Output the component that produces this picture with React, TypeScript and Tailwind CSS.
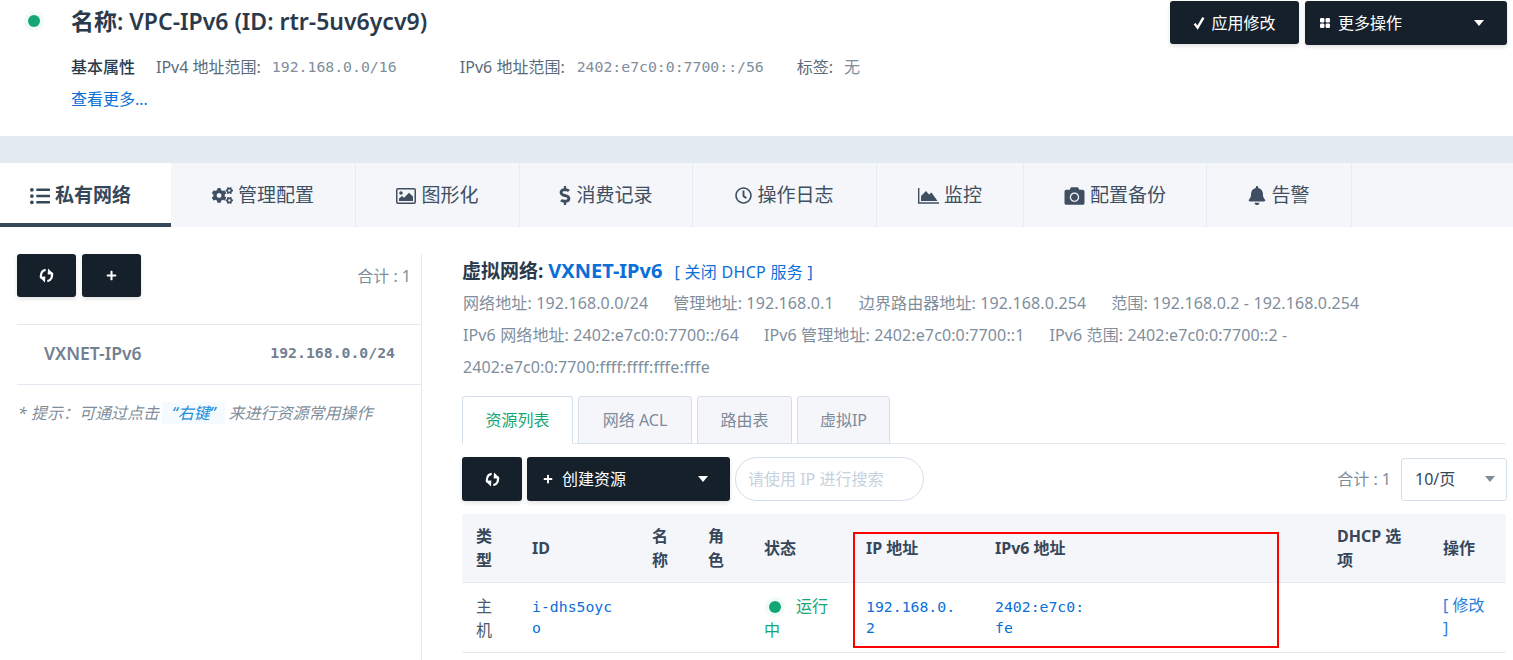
import { FaBell, FaCamera, FaCogs, FaDollarSign, FaListUl, FaPlus, FaRegClock } from 'react-icons/fa';
import type { ReactNode } from 'react';

const SANS = 'font-["Noto_Sans","Noto_Sans_CJK_SC",sans-serif]';
const MONO = 'font-["DejaVu_Sans_Mono","Noto_Sans_CJK_SC",monospace] text-[14.8px]';

const RefreshIcon = () => (
  <svg viewBox="0 0 20 20" className="h-[17px] w-[17px]" fill="none" stroke="currentColor" strokeWidth="2.6">
    <path d="M9 3.4A6.6 6.6 0 0 0 4.4 13.4" />
    <path d="M1.4 11.6 L8.6 11.2 L8.2 18.2 Z" fill="currentColor" stroke="none" />
    <path d="M11 16.6A6.6 6.6 0 0 0 15.6 6.6" />
    <path d="M18.6 8.4 L11.4 8.8 L11.8 1.8 Z" fill="currentColor" stroke="none" />
  </svg>
);

const CheckIcon = () => (
  <svg viewBox="0 0 12 14" className="h-[14px] w-[12px]" fill="none" stroke="currentColor" strokeWidth="2.4">
    <path d="M1.6 7.6 L4.6 11.6 L10.4 1.6" />
  </svg>
);

const GridIcon = () => (
  <svg viewBox="0 0 10 10" className="h-[10px] w-[10px]" fill="currentColor">
    <rect x="0" y="0" width="4.4" height="4.4" rx="1.2" />
    <rect x="5.6" y="0" width="4.4" height="4.4" rx="1.2" />
    <rect x="0" y="5.6" width="4.4" height="4.4" rx="1.2" />
    <rect x="5.6" y="5.6" width="4.4" height="4.4" rx="1.2" />
  </svg>
);

const FrameImageIcon = () => (
  <svg viewBox="0 0 20 16" className="h-[16px] w-[20px]">
    <rect x="0.75" y="0.75" width="18.5" height="14.5" rx="1.2" fill="none" stroke="currentColor" strokeWidth="1.5" />
    <circle cx="5" cy="5" r="1.8" fill="currentColor" />
    <path d="M3 13 V10.5 L6 8 L8 9.8 L13 4.8 L17 8.6 V13 Z" fill="currentColor" />
  </svg>
);

const AreaIcon = () => (
  <svg viewBox="0 0 21 16" className="h-[16px] w-[21px]">
    <path d="M0.7 0 V15 H21" fill="none" stroke="currentColor" strokeWidth="1.4" />
    <path d="M3 13 V8 L8 3 L11 6.5 L13.5 4.5 L19.5 13 Z" fill="currentColor" />
  </svg>
);

const TABS = [
  { label: '私有网络', icon: <FaListUl className="h-[20px] w-[20px]" />, width: 'w-[171px]', active: true },
  { label: '管理配置', icon: <FaCogs className="h-[21px] w-[21px]" />, width: 'w-[185px]' },
  { label: '图形化', icon: <FrameImageIcon />, width: 'w-[164px]' },
  { label: '消费记录', icon: <FaDollarSign className="h-[19px] w-[12px]" />, width: 'w-[173px]' },
  { label: '操作日志', icon: <FaRegClock className="h-[17px] w-[17px]" />, width: 'w-[184px]' },
  { label: '监控', icon: <AreaIcon />, width: 'w-[147px]' },
  { label: '配置备份', icon: <FaCamera className="h-[20px] w-[21px]" />, width: 'w-[183px]' },
  { label: '告警', icon: <FaBell className="h-[19px] w-[18px]" />, width: 'w-[145px]' },
];

const Dot = () => (
  <span className="inline-block h-[12px] w-[12px] rounded-full bg-[#15a675] shadow-[0_0_0_4px_#f0fbf7]" />
);

const DarkButton = ({ className, children }: { className: string; children: ReactNode }) => (
  <button
    type="button"
    className={`flex items-center rounded-[3px] bg-[#15202b] text-white shadow-[0_2px_4px_rgba(0,0,0,0.12)] ${className}`}
  >
    {children}
  </button>
);

const Caret = ({ className = 'border-t-white' }: { className?: string }) => (
  <span className={`h-0 w-0 border-x-[5.5px] border-t-[6px] border-x-transparent ${className}`} />
);

const SubTab = ({ label, width, active }: { label: string; width: string; active?: boolean }) => (
  <div
    className={`-mb-px flex h-[48px] items-center justify-center rounded-t-[3px] border border-[#d5dfe9] text-[16px] ${width} ${
      active ? 'border-b-white bg-white text-[#15a675]' : 'bg-[#f4f6fa] text-[#7c8a99]'
    }`}
  >
    {label}
  </div>
);

const Th = ({ children, width }: { children?: ReactNode; width: string }) => (
  <th className={`${width} pl-[14px] pr-[14px] text-left align-middle text-[16px] font-bold leading-[24px] text-[#36475a]`}>
    {children}
  </th>
);

// cells carry their own font size and line height, mono ones are smaller
const Td = ({ children, className = '' }: { children?: ReactNode; className?: string }) => (
  <td className={`break-all pl-[14px] align-middle ${className}`}>{children}</td>
);

export default function App() {
  return (
    <div className={`relative h-[660px] w-[1513px] overflow-hidden bg-white text-[#36475a] ${SANS}`}>
      <header className="flex h-[136px] items-start justify-between pr-[6px]">
        <div className="flex">
          <div className="flex w-[71px] justify-center pr-[4px] pt-[15px]">
            <Dot />
          </div>
          <div>
            <h1 className="mt-[5px] text-[23px] font-semibold leading-[32px] text-[#2a3a4c]">
              名称: VPC-IPv6 (ID: rtr-5uv6ycv9)
            </h1>
            <div className="mt-[19px] flex items-center text-[16px] leading-[22px] text-[#5b6a7a]">
              <span className="w-[85px] font-medium text-[#2a3a4c]">基本属性</span>
              <span>IPv4 地址范围:</span>
              <span className={`ml-[11px] w-[188px] text-[#808e9c] ${MONO}`}>192.168.0.0/16</span>
              <span>IPv6 地址范围:</span>
              <span className={`ml-[12px] w-[220px] text-[#808e9c] ${MONO}`}>2402:e7c0:0:7700::/56</span>
              <span>标签:</span>
              <span className="ml-[11px] text-[#808e9c]">无</span>
            </div>
            <a className="mt-[10px] block text-[16px] leading-[22px] text-[#0b6fd8]">查看更多...</a>
          </div>
        </div>
        <div className="mt-px flex gap-[6px]">
          <DarkButton className="h-[43px] w-[129px] justify-center gap-[6px] text-[16px]">
            <CheckIcon />
            应用修改
          </DarkButton>
          <DarkButton className="h-[44px] w-[202px] justify-between pl-[15px] pr-[23px] text-[16px]">
            <span className="flex items-center gap-[8px]">
              <GridIcon />
              更多操作
            </span>
            <Caret />
          </DarkButton>
        </div>
      </header>

      <div className="h-[27px] bg-[#e3eaf1]" />

      <nav className="flex h-[64px] bg-[#f4f6fa]">
        {TABS.map((tab) => (
          <div
            key={tab.label}
            className={`flex items-center justify-center gap-[5px] text-[19px] ${tab.width} ${
              tab.active
                ? 'border-b-[4px] border-[#36475a] bg-white pr-[10px] pt-[5px] font-bold'
                : 'border-r border-[#e6ebf1] pt-px text-[#3f4f61]'
            }`}
          >
            {tab.icon}
            {tab.label}
          </div>
        ))}
      </nav>

      <main className="flex">
        <aside className="ml-[17px] mt-[27px] h-[406px] w-[405px] border-r border-[#e3eaf1]">
          <div className="flex h-[71px] justify-between border-b border-[#e3eaf1] pr-[10px]">
            <div className="flex gap-[6px]">
              <DarkButton className="h-[43px] w-[59px] justify-center">
                <RefreshIcon />
              </DarkButton>
              <DarkButton className="h-[43px] w-[59px] justify-center text-[11px]">
                <FaPlus />
              </DarkButton>
            </div>
            <span className="mt-[11px] text-[16px] leading-[22px] text-[#808e9c]">合计 : 1</span>
          </div>
          <div className="flex h-[60px] items-center justify-between border-b border-[#e3eaf1] pb-[3px] pl-[27px] pr-[26px] text-[#728090]">
            <span className="text-[17.5px] font-semibold">VXNET-IPv6</span>
            <span className={`font-bold ${MONO}`}>192.168.0.0/24</span>
          </div>
          <p className="mt-[17px] pl-[1px] text-[16px] italic leading-[22px] text-[#808e9c]">
            * 提示：可通过点击
            <span className="ml-[3px] bg-[#f5fafe] px-[10px] text-[#1c8fdc]">“右键”</span>
            <span className="ml-[3px]">来进行资源常用操作</span>
          </p>
        </aside>

        <section className="ml-[40px] mt-[32px] w-[1044px]">
          <h2 className="flex items-baseline text-[19px] font-bold leading-[24px] text-[#2a3a4c]">
            虚拟网络:
            <span className="ml-[5px] text-[20px] text-[#0b6fd8]">VXNET-IPv6</span>
            <a className="ml-[12px] text-[16px] font-normal tracking-[0.3px] text-[#0b6fd8]">[ 关闭 DHCP 服务 ]</a>
          </h2>
          <div className="mt-[3px] pl-px text-[16px] leading-[32px] tracking-[0.12px] text-[#808e9c]">
            <div className="flex gap-[25px]">
              <span>网络地址: 192.168.0.0/24</span>
              <span>管理地址: 192.168.0.1</span>
              <span>边界路由器地址: 192.168.0.254</span>
              <span>范围: 192.168.0.2 - 192.168.0.254</span>
            </div>
            <div className="flex gap-[25px]">
              <span>IPv6 网络地址: 2402:e7c0:0:7700::/64</span>
              <span>IPv6 管理地址: 2402:e7c0:0:7700::1</span>
              <span>IPv6 范围: 2402:e7c0:0:7700::2 -</span>
            </div>
            <div>2402:e7c0:0:7700:ffff:ffff:fffe:fffe</div>
          </div>

          <div className="mt-[13px] flex h-[48px] gap-[5px] border-b border-[#e3eaf1]">
            <SubTab label="资源列表" width="w-[111px]" active />
            <SubTab label="网络 ACL" width="w-[114px]" />
            <SubTab label="路由表" width="w-[95px]" />
            <SubTab label="虚拟IP" width="w-[93px]" />
          </div>

          <div className="mt-[13px] flex h-[44px] items-center">
            <DarkButton className="h-[44px] w-[60px] justify-center">
              <RefreshIcon />
            </DarkButton>
            <DarkButton className="ml-[5px] h-[44px] w-[203px] justify-between pl-[16px] pr-[22px] text-[16px]">
              <span className="flex items-center gap-[9px]">
                <FaPlus className="text-[10px]" />
                创建资源
              </span>
              <Caret />
            </DarkButton>
            <div className="ml-[5px] flex h-[44px] w-[189px] items-center rounded-full border border-[#d5dfe9] pl-[12px] text-[16px] text-[#c6d2de]">
              请使用 IP 进行搜索
            </div>
            <span className="ml-auto text-[16px] text-[#808e9c]">合计 : 1</span>
            <div className="-mr-px ml-[10px] flex h-[43px] w-[106px] items-center justify-between rounded-[3px] border border-[#d5dfe9] pl-[13px] pr-[11px] text-[16px] text-[#36475a]">
              10/页
              <Caret className="border-t-[#808e9c]" />
            </div>
          </div>

          <table className="mt-[13px] w-[1044px] table-fixed border-collapse">
            <thead>
              <tr className="h-[68px] border-b border-[#e3eaf1] bg-[#f4f6fa]">
                <Th width="w-[56px]">类型</Th>
                <Th width="w-[120px]">ID</Th>
                <Th width="w-[56px]">名称</Th>
                <Th width="w-[56px]">角色</Th>
                <Th width="w-[102px]">状态</Th>
                <Th width="w-[129px]">IP 地址</Th>
                <Th width="w-[342px]">IPv6 地址</Th>
                <Th width="w-[106px]">DHCP 选项</Th>
                <Th width="w-[77px]">操作</Th>
              </tr>
            </thead>
            <tbody>
              <tr className="h-[70px] border-b border-[#e3eaf1]">
                <Td className="pr-[14px] pt-[2px] text-[16px] leading-[24px] text-[#4a5a6b]">主机</Td>
                <Td className={`pr-[22px] leading-[21px] text-[#0b6fd8] ${MONO}`}>i-dhs5oyco</Td>
                <Td />
                <Td />
                <Td className="pr-[14px] pt-[2px] text-[16px] leading-[23px] text-[#15a675]">
                  <span className="ml-[5px] mr-[15px] inline-block align-[-1px]">
                    <Dot />
                  </span>
                  运行中
                </Td>
                <Td className={`pr-[22px] leading-[21px] text-[#0b6fd8] ${MONO}`}>192.168.0.2</Td>
                <Td className={`pr-[14px] leading-[21px] text-[#0b6fd8] ${MONO}`}>
                  2402:e7c0:
                  <br />
                  fe
                </Td>
                <Td />
                <Td className="pr-[14px] text-[16px] leading-[23px] text-[#2b7fdc]">[ 修改 ]</Td>
              </tr>
            </tbody>
          </table>
        </section>
      </main>

      <div className="pointer-events-none absolute left-[853px] top-[532px] h-[116px] w-[426px] border-2 border-[#f00]" />
    </div>
  );
}
